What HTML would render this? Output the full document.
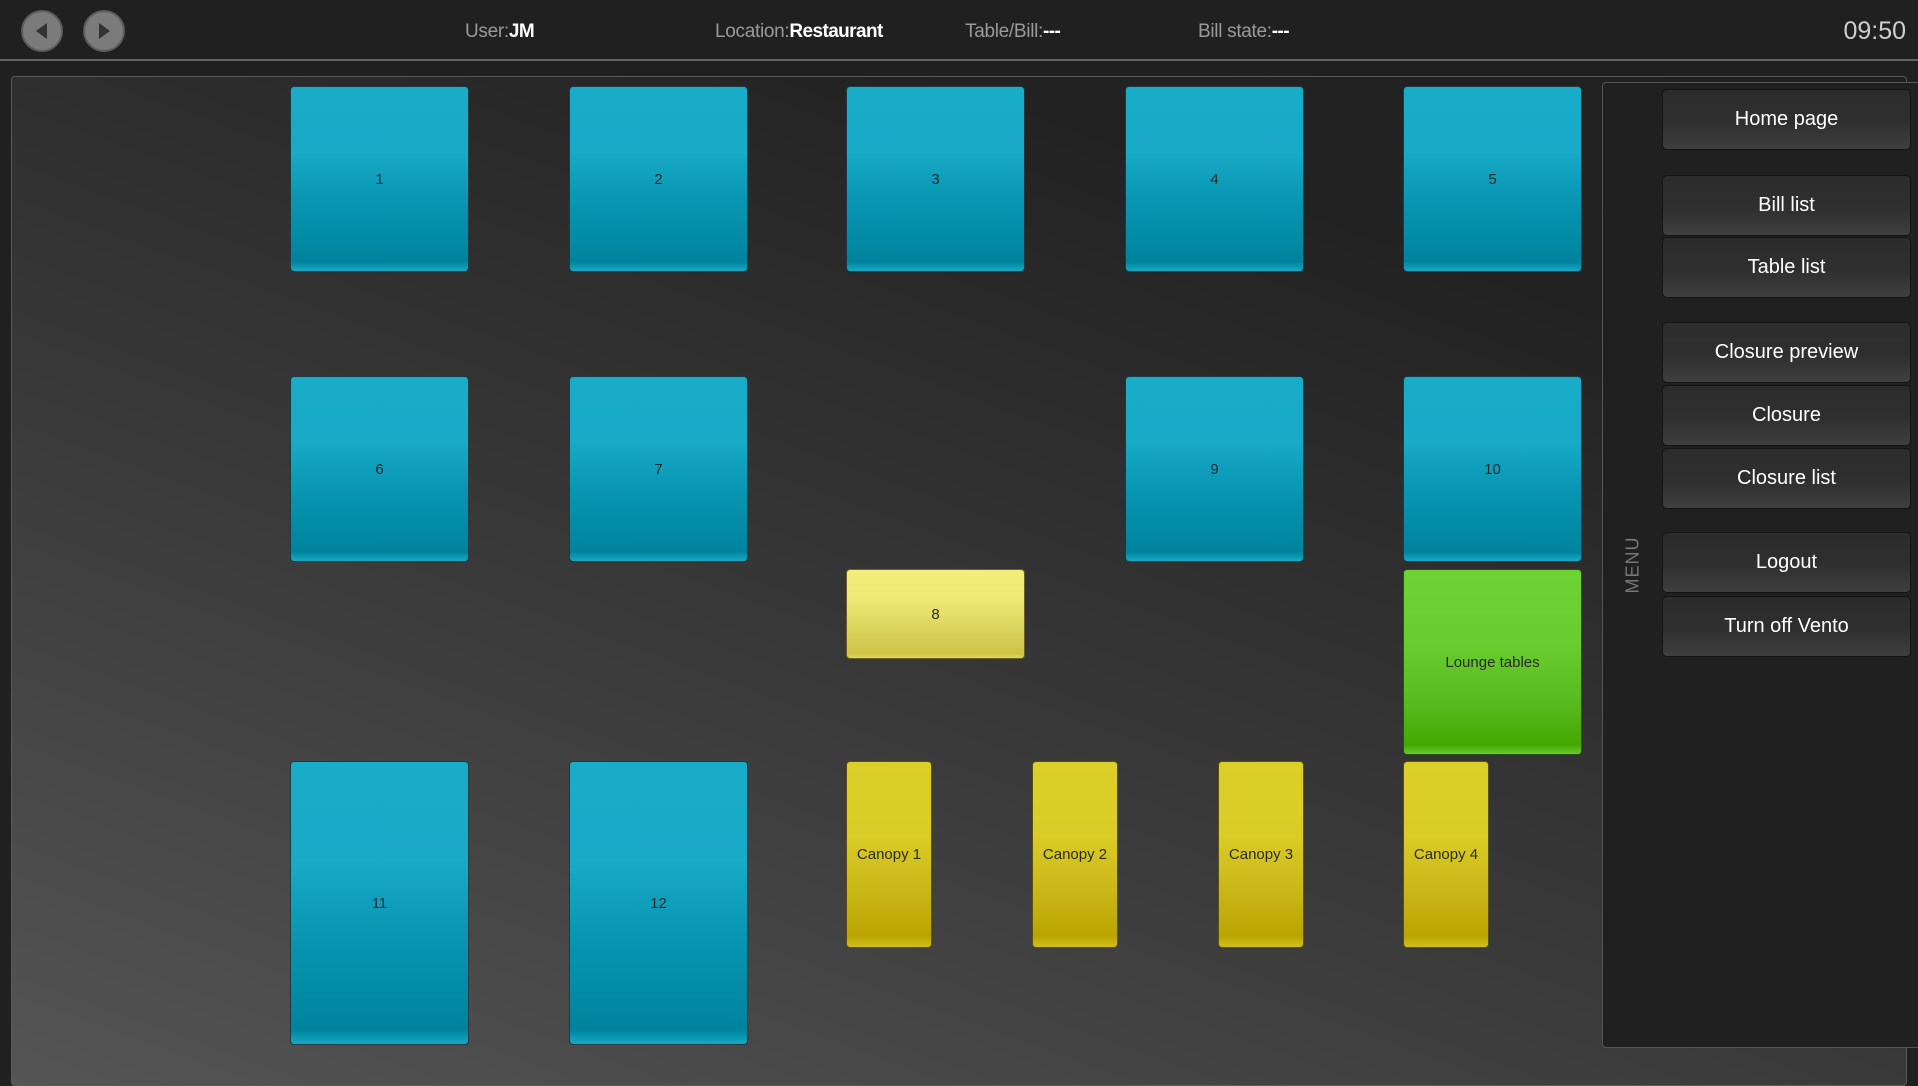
<!DOCTYPE html>
<html><head><meta charset="utf-8"><style>
*{margin:0;padding:0;box-sizing:border-box}
body{width:1918px;height:1054px;overflow:hidden;background:#202020;font-family:"Liberation Sans",sans-serif;position:relative}
.hdr{position:absolute;left:0;top:0;width:1918px;height:61px;background:#202020;border-bottom:2px solid #646464}
.nav{position:absolute;top:10px;width:42px;height:42px;border-radius:50%;background:#7b7b7b;border:2px solid #5c5c5c}
.ht{position:absolute;top:21px;font-size:19px;color:#9a9a9a;letter-spacing:-0.3px}
.ht b{color:#fff;font-weight:bold;letter-spacing:-0.6px}
.time{position:absolute;right:12px;top:17px;font-size:25px;color:#cfcfcf}
.main{position:absolute;left:11px;top:76px;width:1896px;height:1010px;border:1px solid #5a5a5a;border-radius:4px;background:linear-gradient(20deg,#555 0%,#3a3a3a 40%,#222 80%,#202020 100%)}
.t{position:absolute;border:1px solid #1c3a40;border-radius:4px;display:flex;align-items:center;justify-content:center;font-size:15px;color:#2a2a2a}
.b{background:linear-gradient(#19acc9 0%,#18aac7 35%,#0896b2 62%,#00839d 95%,#15aac6 100%);width:179px;height:186px}
.y8{background:linear-gradient(#f2ee7a 0%,#eee874 35%,#d8d25a 70%,#cfc348 95%,#e0d860 100%);border-color:#6a6420}
.c{background:linear-gradient(#dccf28 0%,#dacc26 40%,#c9b618 70%,#baa400 94%,#d0c020 100%);width:86px;height:187px;border-color:#5a5010}
.g{background:linear-gradient(#6fd234 0%,#69cd30 40%,#55b81c 75%,#46a700 95%,#66cc30 100%);border-color:#2a5010}
.menu{position:absolute;left:1602px;top:82px;width:330px;height:966px;background:#202020;border:1px solid #555;border-radius:4px}
.mlab{position:absolute;left:1622px;top:565px;transform:translate(0,-50%) rotate(-90deg);transform-origin:center;font-size:18px;color:#777;letter-spacing:1px;width:60px;text-align:center;margin-left:-19px}
.btn{position:absolute;left:1662px;width:249px;height:61px;border:1px solid #141414;border-radius:5px;background:linear-gradient(#2c2c2c,#2f2f2f 55%,#3f3f3f);color:#fff;font-size:20px;display:flex;align-items:center;justify-content:center}
</style></head><body>
<div class="hdr">
<div class="nav" style="left:21px"><svg width="38" height="38" style="position:absolute;left:0;top:0"><polygon points="13,19 24,11 24,27" fill="#333"/></svg></div>
<div class="nav" style="left:83px"><svg width="38" height="38" style="position:absolute;left:0;top:0"><polygon points="25,19 14,11 14,27" fill="#333"/></svg></div>
<div class="ht" style="left:465px">User:<b>JM</b></div>
<div class="ht" style="left:715px">Location:<b>Restaurant</b></div>
<div class="ht" style="left:965px">Table/Bill:<b>---</b></div>
<div class="ht" style="left:1198px">Bill state:<b>---</b></div>
<div class="time">09:50</div>
</div>
<div class="main"></div>
<div class="t b" style="left:290px;top:86px">1</div>
<div class="t b" style="left:569px;top:86px">2</div>
<div class="t b" style="left:846px;top:86px">3</div>
<div class="t b" style="left:1125px;top:86px">4</div>
<div class="t b" style="left:1403px;top:86px">5</div>
<div class="t b" style="left:290px;top:376px">6</div>
<div class="t b" style="left:569px;top:376px">7</div>
<div class="t b" style="left:1125px;top:376px">9</div>
<div class="t b" style="left:1403px;top:376px">10</div>
<div class="t y8" style="left:846px;top:569px;width:179px;height:90px">8</div>
<div class="t g" style="left:1403px;top:569px;width:179px;height:186px">Lounge tables</div>
<div class="t b" style="left:290px;top:761px;height:284px">11</div>
<div class="t b" style="left:569px;top:761px;height:284px">12</div>
<div class="t c" style="left:846px;top:761px">Canopy 1</div>
<div class="t c" style="left:1032px;top:761px">Canopy 2</div>
<div class="t c" style="left:1218px;top:761px">Canopy 3</div>
<div class="t c" style="left:1403px;top:761px">Canopy 4</div>
<div class="menu"></div>
<div class="mlab">MENU</div>
<div class="btn" style="top:89px">Home page</div>
<div class="btn" style="top:175px">Bill list</div>
<div class="btn" style="top:237px">Table list</div>
<div class="btn" style="top:322px">Closure preview</div>
<div class="btn" style="top:385px">Closure</div>
<div class="btn" style="top:448px">Closure list</div>
<div class="btn" style="top:532px">Logout</div>
<div class="btn" style="top:596px">Turn off Vento</div>
</body></html>
